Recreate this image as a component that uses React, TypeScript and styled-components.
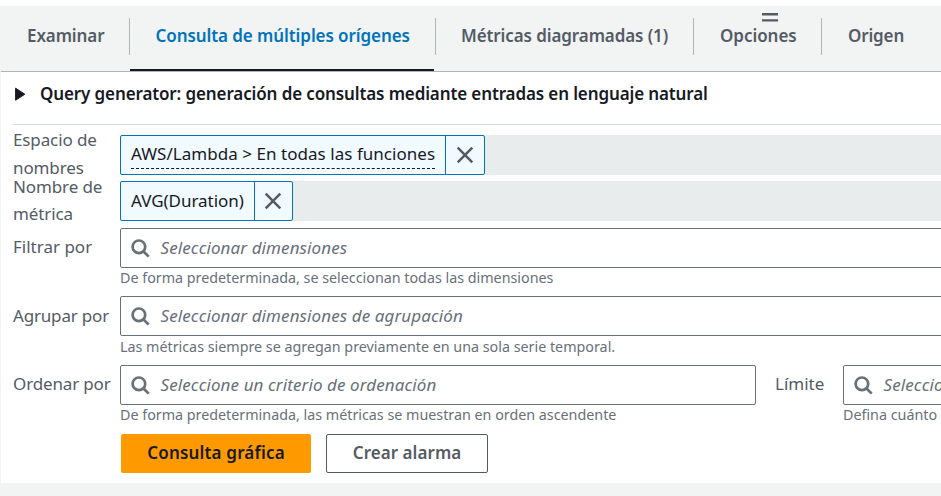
import React from 'react';
import styled, { createGlobalStyle } from 'styled-components';

const color = {
  text: '#16191f',
  secondary: '#545b64',
  hint: '#687078',
  link: '#0073bb',
  line: '#aab7b8',
  divider: '#d5dbdb',
  surface: '#f2f3f3',
  disabled: '#e9ecec',
  token: '#f1faff',
  primary: '#ff9900',
};

const GlobalStyle = createGlobalStyle`
  *, *::before, *::after { box-sizing: border-box; }
  body {
    margin: 0;
    overflow: hidden;
    background: #fff;
    color: ${color.text};
    font-family: "Noto Sans", "Open Sans", sans-serif;
    font-size: 17px;
    line-height: 28px;
  }
`;

const Page = styled.div`
  height: 496px;
  padding-top: 6px;
  overflow: hidden;
  display: flex;
  flex-direction: column;
`;

const Panel = styled.main`
  height: 477px;
  flex: none;
  border-left: 1px solid ${color.surface};
`;

const Footer = styled.footer`
  flex: 1;
  background: ${color.surface};
`;

const TabBar = styled.nav`
  position: relative;
  display: flex;
  height: 66px;
  background: ${color.surface};
  border-bottom: 1px solid ${color.line};
`;

const Tab = styled.button<{ $width: number; $active?: boolean; $tracking?: number; $inset?: number }>`
  display: flex;
  align-items: flex-start;
  flex: none;
  width: ${(p) => p.$width}px;
  height: 65px;
  margin: 0;
  padding: 13px 0 0 ${(p) => p.$inset ?? 26}px;
  border: 0;
  border-bottom: 2px solid ${(p) => (p.$active ? color.text : 'transparent')};
  background: none;
  color: ${(p) => (p.$active ? color.link : color.secondary)};
  font: 600 17px/34px "Noto Sans", sans-serif;
  letter-spacing: ${(p) => p.$tracking ?? 0}px;
  white-space: nowrap;
`;

const TabDivider = styled.i<{ $gap?: number }>`
  flex: none;
  width: 1px;
  height: 37px;
  margin: 12px 0 0 ${(p) => p.$gap ?? 0}px;
  background: ${color.line};
`;

const DragHandle = styled.svg`
  position: absolute;
  left: 761px;
  top: 7px;
`;

const Generator = styled.header`
  display: flex;
  align-items: center;
  height: 53px;
  margin-left: 12px;
  padding-bottom: 8px;
  border-bottom: 1px solid ${color.divider};
`;

const GeneratorTitle = styled.h2`
  margin: 0 0 0 14px;
  font-size: 17px;
  font-weight: 600;
  line-height: 28px;
  letter-spacing: -0.12px;
  white-space: nowrap;
`;

const Form = styled.form`
  display: flex;
  flex-direction: column;
  padding: 10px 0 0 12px;
`;

const Row = styled.div<{ $height: number }>`
  display: flex;
  flex: none;
  height: ${(p) => p.$height}px;
`;

const Label = styled.label<{ $width?: number; $top?: number; $line?: number; $tracking?: number }>`
  flex: none;
  width: ${(p) => p.$width ?? 107}px;
  margin-top: ${(p) => p.$top ?? 5}px;
  color: ${color.secondary};
  line-height: ${(p) => p.$line ?? 28}px;
  letter-spacing: ${(p) => p.$tracking ?? -0.12}px;
  white-space: nowrap;
`;

const Field = styled.div<{ $width?: number }>`
  flex: none;
  width: ${(p) => p.$width ?? 840}px;
`;

const TokenTrack = styled.div`
  display: flex;
  height: 40px;
  background: ${color.disabled};
`;

const Token = styled.div<{ $width: number }>`
  display: flex;
  width: ${(p) => p.$width}px;
  border: 1px solid ${color.link};
  border-radius: 2px;
  background: ${color.token};
`;

const TokenBody = styled.div`
  flex: 1;
  padding: 5px 0 0 10px;
  white-space: nowrap;
`;

const TokenText = styled.span<{ $dashed?: boolean }>`
  display: block;
  width: fit-content;
  height: 28px;
  line-height: ${(p) => (p.$dashed ? 26 : 27)}px;
  letter-spacing: ${(p) => (p.$dashed ? 0.04 : -0.03)}px;
  border-bottom: ${(p) => (p.$dashed ? `1px dashed ${color.text}` : '0')};
`;

const TokenRemove = styled.button<{ $width: number }>`
  display: flex;
  align-items: center;
  justify-content: flex-end;
  width: ${(p) => p.$width}px;
  padding: 0 10px 0 0;
  border: 0;
  border-left: 1px solid ${color.link};
  background: none;
`;

const SearchBox = styled.div`
  display: flex;
  align-items: center;
  gap: 10.5px;
  height: 40px;
  padding-left: 10px;
  border: 1px solid ${color.hint};
  border-radius: 2px;
  background: #fff;
`;

const Placeholder = styled.span`
  color: ${color.hint};
  font-style: italic;
  letter-spacing: 0.1px;
  white-space: nowrap;
`;

const Hint = styled.p<{ $drop?: number }>`
  margin: ${(p) => p.$drop ?? 0}px 0 0;
  color: ${color.hint};
  font-size: 14.3px;
  line-height: 20px;
  white-space: nowrap;
`;

const Actions = styled.div`
  display: flex;
  gap: 15px;
  padding-left: 108px;
`;

const Button = styled.button<{ $width: number; $primary?: boolean }>`
  width: ${(p) => p.$width}px;
  height: 39px;
  padding: 0 0 1px;
  border: 1px solid ${(p) => (p.$primary ? color.primary : color.secondary)};
  border-radius: 2px;
  background: ${(p) => (p.$primary ? color.primary : '#fff')};
  color: ${(p) => (p.$primary ? color.text : color.secondary)};
  font: 650 17px/28px "Noto Sans", sans-serif;
  letter-spacing: ${(p) => (p.$primary ? 0.18 : 0.05)}px;
`;

const CloseIcon = () => (
  <svg width="18" height="18" viewBox="0 0 18 18" fill="none" stroke={color.secondary} strokeWidth="2.5">
    <path d="M1.7 1.7l14.6 14.6M16.3 1.7l-14.6 14.6" />
  </svg>
);

const SearchIcon = () => (
  <svg width="19" height="19" viewBox="0 0 19 19" fill="none" stroke={color.hint} strokeWidth="2.7">
    <circle cx="7.9" cy="7.8" r="6.3" />
    <path d="M12.3 12.2l5.4 5.4" />
  </svg>
);

const Search = ({ text }: { text: string }) => (
  <SearchBox>
    <SearchIcon />
    <Placeholder>{text}</Placeholder>
  </SearchBox>
);

export default function App() {
  return (
    <>
      <GlobalStyle />
      <Page>
        <Panel>
          <TabBar>
            <Tab type="button" $width={128} $tracking={-0.1}>Examinar</Tab>
            <TabDivider />
            <Tab type="button" $width={304} $inset={25.5} $active $tracking={-0.08}>Consulta de múltiples orígenes</Tab>
            <TabDivider $gap={1} />
            <Tab type="button" $width={257} $inset={25} $tracking={-0.1}>Métricas diagramadas (1)</Tab>
            <TabDivider />
            <Tab type="button" $width={127} $tracking={-0.05}>Opciones</Tab>
            <TabDivider />
            <Tab type="button" $width={119} $tracking={-0.15}>Origen</Tab>
            <DragHandle width="16" height="9" viewBox="0 0 16 9" fill={color.secondary}>
              <path d="M0 0h16v2.4H0zM0 6.2h16v2.4H0z" />
            </DragHandle>
          </TabBar>
          <Generator>
            <svg width="13" height="14" viewBox="0 0 13 14" fill={color.text}>
              <path d="M2.6 1.2l9.2 6-9.2 6z" stroke={color.text} strokeWidth="1" strokeLinejoin="round" />
            </svg>
            <GeneratorTitle>Query generator: generación de consultas mediante entradas en lenguaje natural</GeneratorTitle>
          </Generator>
          <Form>
            <Row $height={46}>
              <Label $top={-9} $line={27.5}>Espacio de<br />nombres</Label>
              <Field>
                <TokenTrack>
                  <Token $width={365}>
                    <TokenBody><TokenText $dashed>AWS/Lambda &gt; En todas las funciones</TokenText></TokenBody>
                    <TokenRemove type="button" $width={39} aria-label="Quitar"><CloseIcon /></TokenRemove>
                  </Token>
                </TokenTrack>
              </Field>
            </Row>
            <Row $height={47}>
              <Label $top={-8} $line={27}>Nombre de<br />métrica</Label>
              <Field>
                <TokenTrack>
                  <Token $width={173}>
                    <TokenBody><TokenText>AVG(Duration)</TokenText></TokenBody>
                    <TokenRemove type="button" $width={38} aria-label="Quitar"><CloseIcon /></TokenRemove>
                  </Token>
                </TokenTrack>
              </Field>
            </Row>
            <Row $height={68}>
              <Label $tracking={0}>Filtrar por</Label>
              <Field>
                <Search text="Seleccionar dimensiones" />
                <Hint>De forma predeterminada, se seleccionan todas las dimensiones</Hint>
              </Field>
            </Row>
            <Row $height={69}>
              <Label $top={6} $tracking={-0.18}>Agrupar por</Label>
              <Field>
                <Search text="Seleccionar dimensiones de agrupación" />
                <Hint $drop={1}>Las métricas siempre se agregan previamente en una sola serie temporal.</Hint>
              </Field>
            </Row>
            <Row $height={69}>
              <Label $tracking={-0.15}>Ordenar por</Label>
              <Field $width={655}>
                <Field $width={636}>
                  <Search text="Seleccione un criterio de ordenación" />
                  <Hint>De forma predeterminada, las métricas se muestran en orden ascendente</Hint>
                </Field>
              </Field>
              <Label $width={68} $tracking={0}>Límite</Label>
              <Field $width={300}>
                <Search text="Seleccione un límite" />
                <Hint>Defina cuánto</Hint>
              </Field>
            </Row>
            <Actions>
              <Button type="button" $primary $width={190}>Consulta gráfica</Button>
              <Button type="button" $width={162}>Crear alarma</Button>
            </Actions>
          </Form>
        </Panel>
        <Footer />
      </Page>
    </>
  );
}
